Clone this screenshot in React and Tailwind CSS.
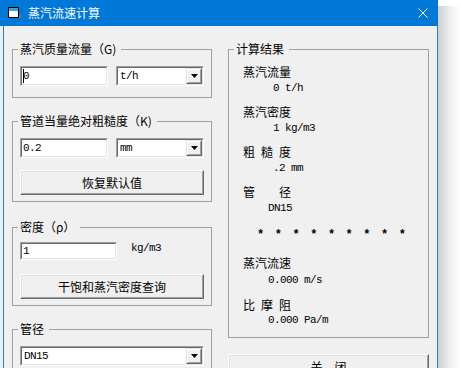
const mono = "font-['Liberation_Mono',monospace] text-[11px] tracking-[-0.6px]"

function Sunken({ className, children }) {
  return (
    <div className={`border border-t-[#a0a0a0] border-l-[#a0a0a0] border-b-white border-r-white ${className}`}>
      <div className="h-full flex items-center bg-white border border-t-[#696969] border-l-[#696969] border-b-[#e3e3e3] border-r-[#e3e3e3]">
        {children}
      </div>
    </div>
  )
}

function Select({ className, value }) {
  return (
    <Sunken className={className}>
      <span className={`flex-1 pl-[2px] ${mono}`}>{value}</span>
      <div className="h-full w-[16px] border border-t-[#e3e3e3] border-l-[#e3e3e3] border-b-[#696969] border-r-[#696969]">
        <div className="h-full flex items-center justify-center bg-[#f0f0f0] border border-t-white border-l-white border-b-[#a0a0a0] border-r-[#a0a0a0]">
          <svg width="7" height="4" viewBox="0 0 7 4">
            <polygon points="0,0 7,0 3.5,4" fill="black" />
          </svg>
        </div>
      </div>
    </Sunken>
  )
}

function Button({ className, children }) {
  return (
    <div className={`border border-t-white border-l-white border-b-[#696969] border-r-[#696969] ${className}`}>
      <div className="h-full flex items-center justify-center gap-[12px] bg-[#f0f0f0] text-[12px] border border-t-[#e3e3e3] border-l-[#e3e3e3] border-b-[#a0a0a0] border-r-[#a0a0a0]">
        {children}
      </div>
    </div>
  )
}

function Group({ label, className, children }) {
  return (
    <fieldset className={`border border-[#a0a0a0] ${className}`}>
      <legend className="ml-[5px] pl-[2px] pr-[5px] text-[12px] leading-[14px]">{label}</legend>
      {children}
    </fieldset>
  )
}

// label chars spread out, as the old dialog pads them with spaces
function Spaced({ chars, gap, className }) {
  return (
    <div className={`flex text-[12px] ${gap} ${className}`}>
      {chars.map(c => <span key={c}>{c}</span>)}
    </div>
  )
}

function Value({ children, indent, className = '' }) {
  return <p className={`leading-[16px] ${indent} ${mono} ${className}`}>{children}</p>
}

export default function App() {
  return (
    <div className="flex w-[460px] h-[368px] overflow-hidden bg-white text-black font-['Noto_Sans_CJK_SC',sans-serif]">
      <div className="w-[438px] shrink-0 flex flex-col">
        <div className="h-[26px] shrink-0 flex items-center bg-[#0078d7] text-white">
          <svg className="ml-[8px]" width="13" height="12" viewBox="0 0 13 12">
            <rect x="0.5" y="0.5" width="10" height="10" fill="white" stroke="black" />
            <rect x="1" y="1" width="9" height="3" fill="#1fb5c4" />
            <rect x="11" y="8" width="2" height="3" fill="#7a7a7a" />
          </svg>
          <span className="ml-[7px] text-[12px] leading-none">蒸汽流速计算</span>
          <svg className="ml-auto mr-[10px]" width="10" height="10" viewBox="0 0 10 10">
            <path d="M0.5 0.5L9.5 9.5M9.5 0.5L0.5 9.5" stroke="white" strokeWidth="1" />
          </svg>
        </div>

        <div className="flex-1 flex bg-[#f0f0f0] pl-[3px]">
          <div className="flex-1 flex gap-4 px-2 pt-4 border-l border-r border-[#1883d7]">
            <div className="w-[200px] flex flex-col">
              <Group label="蒸汽质量流量（G)">
                <div className="flex gap-[8px] px-[7px] pt-[10px] pb-[11px]">
                  <Sunken className="w-[88px] h-[20px]">
                    <span className={`relative ml-[1px] ${mono}`}>
                      0
                      <span className="absolute left-0 top-[1px] bottom-[1px] w-px bg-black" />
                    </span>
                  </Sunken>
                  <Select className="w-[88px] h-[20px]" value="t/h" />
                </div>
              </Group>

              <Group label="管道当量绝对粗糙度（K)" className="mt-4">
                <div className="px-[7px] pt-[10px] pb-[6px]">
                  <div className="flex gap-[8px]">
                    <Sunken className="w-[88px] h-[20px]">
                      <span className={`pl-[1px] ${mono}`}>0.2</span>
                    </Sunken>
                    <Select className="w-[88px] h-[20px]" value="mm" />
                  </div>
                  <Button className="mt-[12px] h-[25px]">恢复默认值</Button>
                </div>
              </Group>

              <Group label="密度（ρ）" className="mt-[18px]">
                <div className="px-[7px] pt-[8px] pb-[6px]">
                  <div className="flex items-start">
                    <Sunken className="w-[97px] h-[18px]">
                      <span className={`pl-[1px] ${mono}`}>1</span>
                    </Sunken>
                    <span className={`ml-[14px] -mt-[1px] leading-[14px] ${mono}`}>kg/m3</span>
                  </div>
                  <Button className="mt-[14px] h-[25px]">干饱和蒸汽密度查询</Button>
                </div>
              </Group>

              <Group label="管径" className="mt-4">
                <div className="px-[7px] pt-[10px] pb-[10px]">
                  <Select className="h-[20px]" value="DN15" />
                </div>
              </Group>
            </div>

            <div className="w-[201px] flex flex-col">
              <Group label="计算结果">
                <div className="px-[14px] pt-[8px] pb-[9px]">
                  <p className="text-[12px] leading-[16px]">蒸汽流量</p>
                  <Value indent="pl-[30px]" className="mb-[8px]">0 t/h</Value>
                  <p className="text-[12px] leading-[16px]">蒸汽密度</p>
                  <Value indent="pl-[30px]" className="mb-[8px]">1 kg/m3</Value>
                  <Spaced chars={['粗', '糙', '度']} gap="gap-[6px]" className="leading-[16px]" />
                  <Value indent="pl-[30px]" className="mb-[8px]">.2 mm</Value>
                  <Spaced chars={['管', '径']} gap="gap-[24px]" className="leading-[16px]" />
                  <Value indent="pl-[25px]" className="mb-[8px]">DN15</Value>
                  <div className="flex justify-between w-[149px] ml-[14px] h-[16px] items-center">
                    {Array.from({ length: 9 }).map((_, i) => (
                      <span key={i} className="font-['Liberation_Mono',monospace] text-[12px] font-bold leading-none relative top-[3px]">*</span>
                    ))}
                  </div>
                  <p className="mt-[15px] text-[12px] leading-[16px]">蒸汽流速</p>
                  <Value indent="pl-[25px]" className="mt-[1px]">0.000 m/s</Value>
                  <Spaced chars={['比', '摩', '阻']} gap="gap-[6px]" className="mt-[9px] leading-[15px]" />
                  <Value indent="pl-[25px]">0.000 Pa/m</Value>
                </div>
              </Group>
              <Button className="mt-[16px] h-[25px]">
                <span>关</span>
                <span>闭</span>
              </Button>
            </div>
          </div>
        </div>
      </div>
      <div className="flex-1 mt-[6px] bg-linear-to-r from-[#cfcfcf] via-[#ececec] to-white" />
    </div>
  )
}
